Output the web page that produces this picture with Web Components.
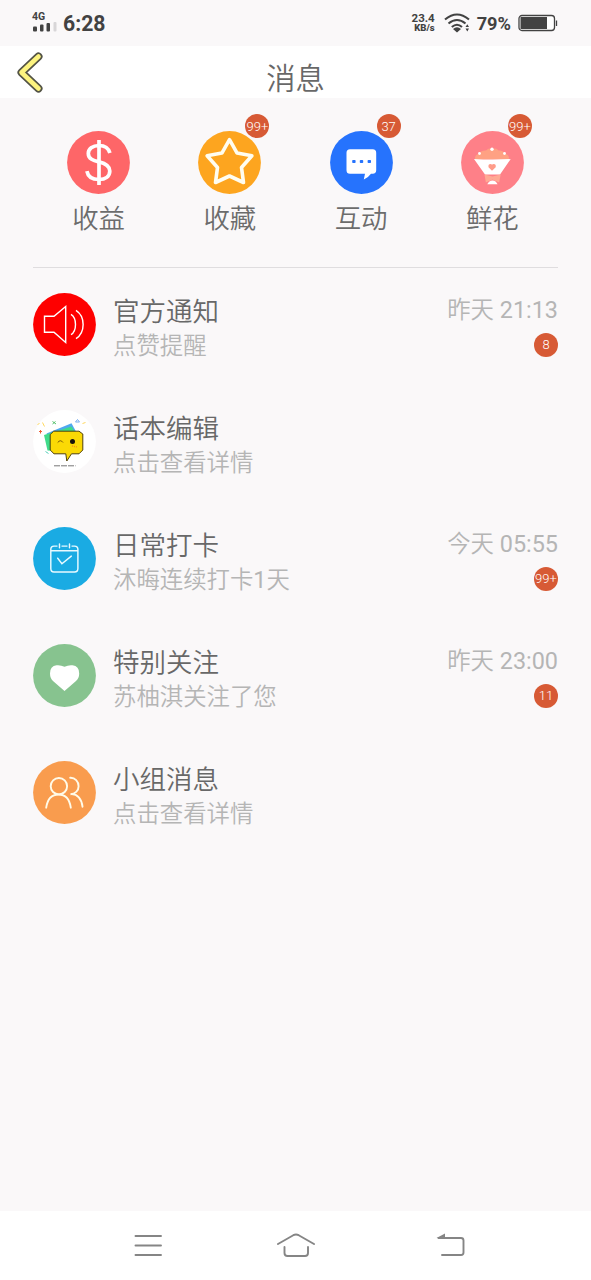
<!DOCTYPE html>
<html lang="zh-CN">
<head>
<meta charset="utf-8">
<title>消息</title>
<style>
html,body{margin:0;height:100%}
body{background:#faf8f9;font-family:Roboto,"Noto Sans CJK SC",sans-serif;overflow:hidden}
</style>
</head>
<body>
<message-page></message-page>
<script>
const define = (name, markup, setup) => {
  const t = document.createElement('template');
  t.innerHTML = markup;
  customElements.define(name, class extends HTMLElement {
    static get observedAttributes() { return ['name', 'icon']; }
    constructor() {
      super();
      this.attachShadow({mode: 'open'}).append(t.content.cloneNode(true));
    }
    attributeChangedCallback() { if (setup) setup(this, this.shadowRoot); }
  });
};

// Artwork is drawn around the centre of each round icon.
const art = {
  money: ['#fe6668', '<g fill="none" stroke="#fff" stroke-width="3.7"><path d="M11.4-9.5C10-14.500 6-17 .5-17C-6-17-10.200-13.500-10.200-9C-10.200-3.500-5-2 .5-.6C7 1 11.300 3.200 11.300 8.500C11.300 14 7 17 .5 17C-6 17-10.600 14-11.600 8.600"/><path d="M.5-22.500V22.500"/></g>'],
  star: ['#fda51f', '<path fill="none" stroke="#fffdf0" stroke-width="3.6" stroke-linejoin="round" d="M0-22.800L7.600-9.400L22.400-6.700L12 5L14 20L0 13.500L-14 20L-12 5L-22.400-6.700L-7.600-9.400Z"/>'],
  chat: ['#2673fd', '<path fill="#fff" d="M-11.500-13.300H11.200Q14.700-13.300 14.700-9.800V7.800Q14.700 11 11.200 11.300H9.500Q7 15 2.300 17L3.500 11.300H-11.500Q-15 11.300-15 7.800V-9.800Q-15-13.300-11.500-13.300Z"/><g fill="#2673fd"><rect x="-9.300" y="-2.600" width="3.400" height="3.200" rx=".8"/><rect x="-1.700" y="-2.600" width="3.400" height="3.200" rx=".8"/><rect x="6.100" y="-2.600" width="3.400" height="3.200" rx=".8"/></g>'],
  flower: ['#fe8088', '<path fill="#ffa183" d="M-17.500-3Q-18-8-13-9Q-11-12.500-6.500-12Q-4-15-0-13.500Q4-15 6-12Q10.500-12.500 12-9Q17-8 16.500-3Z"/><path fill="#fff" d="M-18.500-3.500Q0-2.500 18.200-3.500L7.500 12H-7.500Z"/><g fill="#fff"><circle cx="-.5" cy="-13.200" r="1.700"/><circle cx="-13" cy="-9" r="1.400"/><circle cx="12" cy="-9" r="1.400"/></g><path fill="#ff9c89" d="M-.5 8.300L-4 4.800Q-4.500 1.500-2 1.500Q-.8 1.500-.5 2.300Q0 1.500 1.200 1.500Q3.700 1.500 3.200 4.800Z"/><path fill="#ffa994" d="M-8 12L0 14L8.200 12L6.600 20L0 17L-6.600 20Z"/><path fill="#fff" d="M-5.200 21.800Q-3.500 18 0 18Q3.500 18 5 21.800Z"/>'],
  speaker: ['#fe0000', '<g fill="none" stroke="#fff" stroke-width="1.400"><path d="M-20-8.300H-10.500L1.200-18V18L-10.500 7.800H-20Z"/><path d="M6.500-10.200C12.500-6.500 12.500 6.500 6.500 10.200M11.500-14.200C21-8 21 8 11.500 14.200"/></g>'],
  editor: ['#fff', '<path fill="#4fa8ef" d="M-18-8L7-18.200L12-9V5H-10Z"/><path fill="#3fdb8a" d="M-20.500-6.500L7-15L12-7L0 10L-17 9Z"/><path fill="#fbd905" stroke="#51420c" stroke-width="1" d="M-10.800-10.300H14.500L18.300-7.500V8.500L14.500 12.300H7L2.300 19.500L1.300 12.300H-10.500L-14.300 8.500V-7Z"/><path fill="none" stroke="#7c5b08" stroke-width="1" d="M-6.800 1Q-4-2.500-1.500 1"/><circle cx="8" cy="0" r="2.500" fill="#17130c"/><path stroke="#f48b21" stroke-width="1.300" stroke-dasharray="1 1" d="M7.500 4.500L12.500 5.500"/><path stroke="#555" stroke-width=".8" stroke-dasharray="6 1" d="M-10.500 24.300H11"/><g fill="none" stroke-width="1"><path stroke="#f15d35" d="M-25.500-10H-22.500M-24-11.500V-8"/><path stroke="#55c16b" d="M-12-20L-8.500-17.500M-12-17.500L-9-20"/><path stroke="#79acee" d="M11-19.500L13-22L15-19.500Z"/><path stroke="#ffd95e" d="M-27-17L-25-18M18-18L21-19M-22-19L-20-15"/><path stroke="#54cfbb" d="M-19 10L-16 12"/></g>'],
  calendar: ['#1aabe3', '<g fill="none" stroke="#e9faff" stroke-width="1.450" stroke-linecap="round"><path d="M-7.500-12.400H-10.500Q-13.700-12.400-13.700-9V10Q-13.700 13.500-10.500 13.500H10Q13.400 13.500 13.400 10V-9Q13.400-12.400 10-12.400H7.500M-2.500-12.400H2.500M-13.500-7.800H13.300M-5-14.500V-10.800M5-14.500V-10.800M-6.800-.3L-2.600 5.200L6.800-2.400"/></g>'],
  heart: ['#87c38f', '<path fill="#fff" d="M0 15.500L-11.500 5.500Q-14.500 2.500-14.500-2Q-14.500-9.500-8-10.200Q-4-10.700 0-8.700Q4-10.700 8-10.200Q14.700-9.500 14.700-2Q14.700 2.500 11.500 5.500Z"/>'],
  people: ['#f99c4e', '<g fill="none" stroke="#fffbe9" stroke-width="1.900" stroke-linecap="round"><circle cx="-5.600" cy="-6.300" r="8.200"/><path d="M-18.300 15.200C-17 6-12 2-5.900 2S5 6 6.300 15.200M5.700-14.700C10.500-15 14.100-11 14.100-6.300S10.500 1.600 6 1.700C13 1 17.200 6.500 18 14.200"/></g>']
};

define('round-icon', `<style>:host{display:block;width:63px;height:63px;flex:none}svg{display:block;width:100%;height:100%}</style><svg viewBox="-31.5 -31.5 63 63"></svg>`, (el, root) => {
  const [color, drawing] = art[el.getAttribute('name')];
  root.querySelector('svg').innerHTML = `<circle r="31.400" fill="${color}"/>${drawing}`;
});

define('count-badge', `<style>:host{display:flex;align-items:center;justify-content:center;width:24px;height:24px;border-radius:50%;background:#d75a35;color:#fff;font-size:13px;font-weight:350;line-height:1;white-space:nowrap}</style><span><slot></slot></span>`);

define('quick-entry', `<style>
:host{display:flex;flex-direction:column;align-items:center;flex:1}
.icon{position:relative}
::slotted(count-badge){position:absolute;left:47px;top:-17px}
.label{margin-top:4.500px;color:#6c6c6c;font-size:26.4px;line-height:40px;font-weight:350}
</style><div class="icon"><round-icon></round-icon><slot name="badge"></slot></div><div class="label"><slot></slot></div>`, (el, root) => {
  root.querySelector('round-icon').setAttribute('name', el.getAttribute('icon'));
});

define('message-row', `<style>
:host{display:flex;height:117px;align-items:flex-start;font-weight:350}
.main{flex:1;margin-left:17px}
.title{font-size:26.5px;line-height:38px;color:#686868}
.sub{font-size:23.400px;line-height:30px;color:#b5b5b5}
.meta{display:flex;flex-direction:column;align-items:flex-end;color:#b5b5b5;font-size:23.400px;line-height:34px}
::slotted(count-badge){margin-top:5.500px}
</style><round-icon></round-icon><div class="main"><div class="title"><slot></slot></div><div class="sub"><slot name="sub"></slot></div></div><div class="meta"><slot name="time"></slot><slot name="badge"></slot></div>`, (el, root) => {
  root.querySelector('round-icon').setAttribute('name', el.getAttribute('icon'));
});

define('status-bar', `<style>
:host{display:flex;height:46px;box-sizing:border-box;padding:0 33px 0 32px;justify-content:space-between;align-items:center;color:#424242;font-weight:700}
.side{display:flex;align-items:center}
.cell{width:26px;height:22px;font-size:10.500px;line-height:10px;margin-right:5px}
.cell svg{display:block;margin-top:0}
time{font-size:21.200px;line-height:46px;margin-top:2px}
.rate{font-size:10.500px;line-height:10.500px;text-align:right;width:24px;margin-right:9px}
.rate b{display:block;font-size:9.500px}
.rate span{display:block;font-size:11.500px}
.power{font-size:18.200px;line-height:46px;margin:2px 7px 0 7px}
</style>
<div class="side"><div class="cell">4G<svg width="25" height="10"><g fill="#424242"><rect x="1" y="4.500" width="4" height="5" rx="1"/><rect x="8" y="2.500" width="3.500" height="7" rx="1"/><rect x="14.500" y="1" width="3.500" height="8.500" rx="1"/></g><rect x="21.500" y="0" width="3" height="9.500" rx="1" fill="#d8d6d8"/></svg></div><time>6:28</time></div>
<div class="side"><div class="rate"><span>23.4</span><b>KB/s</b></div>
<svg width="26" height="20" viewBox="444 13 26 20"><g fill="none" stroke="#424242" stroke-width="2.100"><path d="M445 19.500Q457 9.500 469 19.500M448.500 23.500Q457 16.500 465.500 23.500M451.800 27Q457 22.500 462 27"/></g><path fill="#424242" d="M453 29Q457 25.500 461 29L457 32.500ZM465.500 27L467.300 24.300L469 27ZM465.500 28.500H469L467.300 31.500Z"/></svg>
<span class="power">79%</span>
<svg width="40" height="18"><rect x="1" y="1.500" width="35.500" height="15" rx="3" fill="#fff" stroke="#424242" stroke-width="1.300"/><rect x="2.500" y="3" width="26.500" height="12" fill="#424242"/><path d="M38.500 6.500V12" stroke="#424242" stroke-width="1.300"/></svg></div>`);

define('title-bar', `<style>
:host{display:grid;grid-template-columns:64px 1fr 64px;height:52px;background:#fff;color:#686868;align-items:start}
h1{font-size:29.300px;line-height:67px;font-weight:350;margin:0;text-align:center;height:52px}
svg{display:block}
</style><svg width="64" height="52"><g fill="none" stroke-linecap="round" stroke-linejoin="round"><path d="M38.500 10.500L21.500 26.500L38.500 42.500" stroke="#535345" stroke-width="8"/><path d="M38.500 10.500L21.500 26.500L38.500 42.500" stroke="#fdf47f" stroke-width="4.600"/></g></svg><h1><slot></slot></h1>`);

define('system-nav', `<style>
:host{display:flex;height:69px;background:#fff;align-items:center;justify-content:center}
svg{display:block}
</style><svg width="591" height="69" viewBox="0 1211 591 69"><g fill="none" stroke="#858585" stroke-width="1.900" stroke-linecap="round" stroke-linejoin="round"><path d="M135.500 1236H161M135.500 1245.500H161M135.500 1255H161M278 1244L293.300 1235.200Q296 1233.800 298.700 1235.200L314 1244M284.500 1247V1253Q284.500 1256 287.500 1256H305Q308 1256 308 1253V1247M438.500 1238H461Q463.500 1238 463.500 1240.500V1252.500Q463.500 1255 461 1255H442"/></g><path fill="#858585" d="M436.500 1238L445 1233.500V1238.500Z"/></svg>`);

define('message-page', `<style>
:host{display:flex;flex-direction:column;height:1280px;width:591px}
main{flex:1;padding:33px 33px 0 33px}
nav{display:flex;height:136px;border-bottom:1px solid #dfdddf;margin-bottom:25px}
i{font-style:normal;font-weight:400}
</style>
<status-bar></status-bar><title-bar>消息</title-bar>
<main><nav>
<quick-entry icon="money">收益</quick-entry>
<quick-entry icon="star">收藏<count-badge slot="badge">99+</count-badge></quick-entry>
<quick-entry icon="chat">互动<count-badge slot="badge">37</count-badge></quick-entry>
<quick-entry icon="flower">鲜花<count-badge slot="badge">99+</count-badge></quick-entry>
</nav>
<message-row icon="speaker">官方通知<span slot="sub">点赞提醒</span><span slot="time">昨天<i> 21:13</i></span><count-badge slot="badge">8</count-badge></message-row>
<message-row icon="editor">话本编辑<span slot="sub">点击查看详情</span></message-row>
<message-row icon="calendar">日常打卡<span slot="sub">沐晦连续打卡<i>1</i>天</span><span slot="time">今天<i> 05:55</i></span><count-badge slot="badge">99+</count-badge></message-row>
<message-row icon="heart">特别关注<span slot="sub">苏柚淇关注了您</span><span slot="time">昨天<i> 23:00</i></span><count-badge slot="badge">11</count-badge></message-row>
<message-row icon="people">小组消息<span slot="sub">点击查看详情</span></message-row>
</main><system-nav></system-nav>`);
</script>
</body>
</html>
